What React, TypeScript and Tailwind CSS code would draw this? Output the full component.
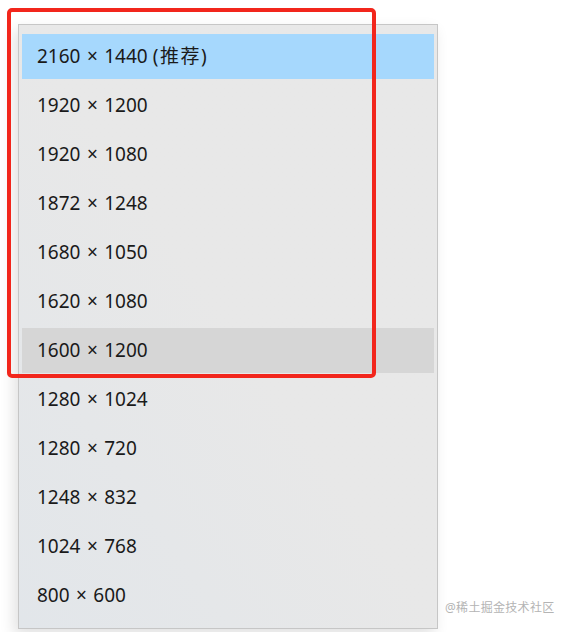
const sizes = [
  "2160 × 1440",
  "1920 × 1200",
  "1920 × 1080",
  "1872 × 1248",
  "1680 × 1050",
  "1620 × 1080",
  "1600 × 1200",
  "1280 × 1024",
  "1280 × 720",
  "1248 × 832",
  "1024 × 768",
  "800 × 600",
];

export default function App() {
  return (
    <div
      className="relative w-[569px] h-[632px] bg-white overflow-hidden"
      style={{ fontFamily: '"Noto Sans", "Noto Sans CJK SC", sans-serif' }}
    >
      <div className="flex pl-[18px] pt-[24px]">
        <div className="w-[420px] h-[605px] border border-[#c6c6c6] bg-gradient-to-tr from-[#e2e6ea] via-[#e8e8e8] to-[#e8e8e8] shadow-[-4px_6px_14px_rgba(0,0,0,0.12)] px-[3px] pt-[9px] flex flex-col gap-[4px]">
          {sizes.map((s, i) => (
            <div
              key={s}
              className={
                "h-[45px] flex items-center pl-[15px] text-[19px] text-[#1a1a1a] [word-spacing:1.5px] " +
                (i === 0 ? "bg-[#a6d8fd]" : i === 6 ? "bg-[#d6d6d6]" : "")
              }
            >
              {s}
              {i === 0 && <span className="ml-[5px] tracking-[1.5px]">(推荐)</span>}
            </div>
          ))}
        </div>
      </div>
      <div className="absolute left-[7px] top-[8px] w-[369px] h-[370px] border-[4px] border-[#f2261c] rounded-[5px]" />
      <div className="absolute left-[445px] top-[599px] text-[12px] text-[#b4b4b4] tracking-[0.3px]">@稀土掘金技术社区</div>
    </div>
  );
}
